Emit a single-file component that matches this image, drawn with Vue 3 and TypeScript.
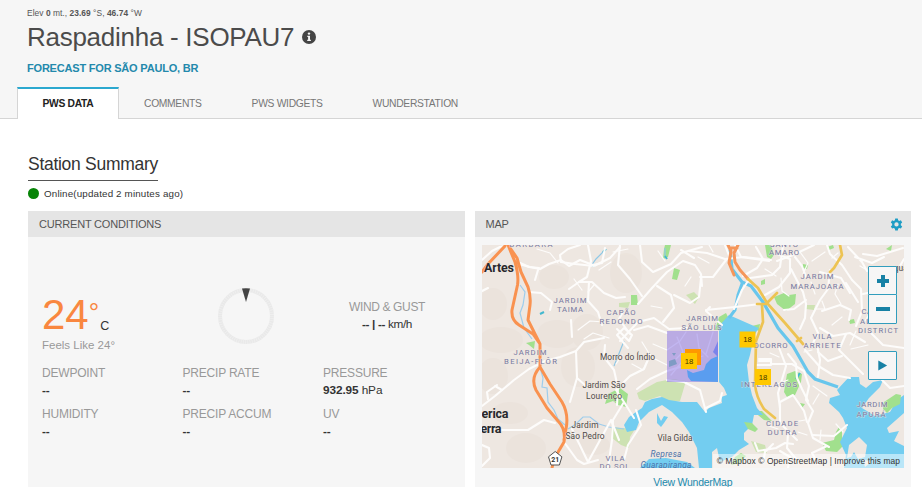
<script setup lang="ts">
interface MapLabel {
  text: string
  x: number
  y: number
  width: number
  kind: 'district' | 'place' | 'town' | 'water'
}

interface Reading {
  label: string
  value: string
  unit?: string
}

const tabs = [
  { label: 'PWS DATA', active: true },
  { label: 'COMMENTS', active: false },
  { label: 'PWS WIDGETS', active: false },
  { label: 'WUNDERSTATION', active: false },
]

const readings: Reading[] = [
  { label: 'DEWPOINT', value: '--' },
  { label: 'PRECIP RATE', value: '--' },
  { label: 'PRESSURE', value: '932.95', unit: 'hPa' },
  { label: 'HUMIDITY', value: '--' },
  { label: 'PRECIP ACCUM', value: '--' },
  { label: 'UV', value: '--' },
]

const labels: MapLabel[] = [
  { text: 'BARBARA', x: 531, y: 246.8, width: 43, kind: 'district' },
  { text: 'SANTO', x: 784, y: 246.5, width: 28, kind: 'district' },
  { text: 'AMARO', x: 784, y: 255, width: 30, kind: 'district' },
  { text: 'JARDIM', x: 570, y: 302.5, width: 33, kind: 'district' },
  { text: 'TAIMA', x: 570, y: 311.5, width: 26, kind: 'district' },
  { text: 'CAPÃO', x: 621, y: 314.5, width: 29, kind: 'district' },
  { text: 'REDONDO', x: 621, y: 323.5, width: 43, kind: 'district' },
  { text: 'JARDIM', x: 702, y: 320.5, width: 32, kind: 'district' },
  { text: 'SÃO LUÍS', x: 701.5, y: 330, width: 40, kind: 'district' },
  { text: 'JARDIM', x: 817, y: 279, width: 33, kind: 'district' },
  { text: 'MARAJOARA', x: 817, y: 288.5, width: 53, kind: 'district' },
  { text: 'CAMPO', x: 876, y: 314, width: 29, kind: 'district' },
  { text: 'ALEGRE', x: 877, y: 323.5, width: 34, kind: 'district' },
  { text: 'DISTRICT', x: 878, y: 332.5, width: 40, kind: 'district' },
  { text: 'VILA', x: 822, y: 339, width: 19, kind: 'district' },
  { text: 'ARRIETE', x: 822, y: 348, width: 37, kind: 'district' },
  { text: 'OCORRO', x: 770.5, y: 348, width: 34, kind: 'district' },
  { text: 'INTERLAGOS', x: 769, y: 386.7, width: 56, kind: 'district' },
  { text: 'JARDIM', x: 530, y: 355, width: 33, kind: 'district' },
  { text: 'BEIJA-FLÔR', x: 530.5, y: 364, width: 53, kind: 'district' },
  { text: 'CIDADE', x: 782, y: 425.7, width: 32, kind: 'district' },
  { text: 'DUTRA', x: 782, y: 435, width: 29, kind: 'district' },
  { text: 'JARDIM', x: 872, y: 407.3, width: 31, kind: 'district' },
  { text: 'APURÁ', x: 871, y: 416.5, width: 29, kind: 'district' },
  { text: 'VILA', x: 615, y: 460.5, width: 19, kind: 'district' },
  { text: 'DO SOL', x: 614.5, y: 469, width: 30, kind: 'district' },
  { text: 'Morro do Índio', x: 627.5, y: 360, width: 55, kind: 'place' },
  { text: 'Jardim São', x: 604, y: 388.3, width: 43, kind: 'place' },
  { text: 'Lourenço', x: 604, y: 399, width: 36, kind: 'place' },
  { text: 'Jardim', x: 585, y: 428.3, width: 27, kind: 'place' },
  { text: 'São Pedro', x: 585, y: 439, width: 39, kind: 'place' },
  { text: 'Vila Gilda', x: 675, y: 440.5, width: 35, kind: 'place' },
  { text: 'Artes', x: 499, y: 272, width: 30, kind: 'town' },
  { text: 'erica', x: 495, y: 418, width: 27, kind: 'town' },
  { text: 'erra', x: 491, y: 433.3, width: 21, kind: 'town' },
  { text: 'Represa', x: 666, y: 457, width: 31, kind: 'water' },
  { text: 'Guarapiranga', x: 666, y: 467.5, width: 51, kind: 'water' },
]

const majorStreets: string[] = [
  'M482 260 L492 251 500 247 506 246 M509 248 L518 262 529 267 539 268 M482 291 L488 288',
  'M515 263 L530 267 540 269 549 264 561 260 569 266 580 260 593 265 602 263 605 248',
  'M561 262 L560 255 568 249 580 245 M561 262 L575 264 594 266 610 258 620 247 M529 292 L541 293 552 302 550 310 M538 270 L535 280',
  'M482 406 L495 396 514 380 529 369 545 361 560 357 576 351 584 342 604 338',
  'M488 399 L487 392 497 385 M495 386 L502 390 M482 428 L503 430 528 430 544 420 555 423',
  'M576 351 L577 378 570 402 M577 378 L586 386 M588 245 L591 261 587 277 579 282 569 289',
  'M579 282 L592 282 604 293 616 298 625 297 M589 282 L588 301 598 312 602 325 M571 320 L572 337',
  'M640 245 L642 262 653 272 671 264 681 253 702 247 M620 245 L618 265 630 279 642 296 M681 250 L694 258',
  'M638 304 L652 288 667 272 683 261 695 265 701 274 702 286 M700 277 L713 277 726 260',
  'M657 286 L671 295 674 308 663 322 M674 295 L684 300 690 303 699 297 701 278',
  'M689 251 L707 253 725 259 744 257 771 260',
  'M623 312 L619 319 630 334 M620 341 L638 322 654 318 669 329 687 328 M634 330 L648 326 667 333',
  'M605 345 L604 357 614 370 618 388 617 405 M617 329 L629 341 632 335 624 328 617 335 628 348',
  'M637 389 L650 379 667 371 680 367 M617 389 L630 376 644 369 650 355',
  'M667 380 L684 382 700 390 706 412 M706 408 L720 401 722 393',
  'M706 310 L735 307 760 304 M722 325 L706 311 710 307',
  'M734 309 L742 290 750 278 772 275 780 267 783 245',
  'M743 276 L757 268 763 259 756 247',
  'M765 295 L779 287 790 273 790 259 777 254 M791 269 L803 292 806 304 805 318 800 329',
  'M777 261 L793 255 814 245 M795 257 L802 266 806 277',
  'M827 245 L830 254 842 265 852 280 861 289 862 311 856 326',
  'M820 272 L841 278 850 293 M830 270 L828 289 820 300 811 318 818 333 811 347',
  'M848 247 L862 262 867 271 M855 257 L872 263 884 257 M863 254 L877 256 903 248',
  'M846 283 L858 302 M822 311 L840 305 851 310 849 320 M820 328 L833 336 850 333 865 342 M806 300 L794 309 784 310',
  'M817 345 L820 360 818 377 M788 354 L796 364 797 378 802 389 808 401 M778 345 L786 366 778 393 780 408',
  'M805 350 L820 367 833 375 850 378 M846 334 L839 350 854 365 863 374',
  'M771 364 L792 364 804 371 809 386 806 400 813 411 808 423 813 438 829 447',
  'M780 402 L793 395 804 411 807 422 M780 404 L780 423 797 440 M757 365h14v-6h-12M759 361h12',
  'M812 435 L834 436 847 425 M788 433 L787 448 797 460 M780 451 L790 457 788 468 M827 446 L812 453 818 464',
  'M755 443 L758 451 776 448 785 443 793 444 M763 463 L765 452 773 444',
  'M482 445 L489 448 490 458 482 466 M564 442 L577 460 584 464 598 460 M572 429 L588 462 M588 462 L611 420 619 440',
  'M616 390 L624 402 613 420 612 440 608 468 M624 402 L634 418 M636 410 L641 425 628 445 624 460',
  'M887 268 L876 277 872 292 863 294 M904 259 L900 266 M870 332 L883 345 904 348 M882 380 L890 388 904 386',
  'M842 356 L828 361 818 352 M725 245 L730 258 M735 245 L741 257 769 261',
]

const minorStreets: string[] = [
  'M537 249 L550 253 558 263 M611 262 L599 270 M613 252 L628 249 M582 290 L574 279 M594 285 L588 292',
  'M658 251 L665 261 M662 308 L651 306 M691 277 L685 286 M698 257 L709 263 M713 252 L709 245',
  'M578 330 L590 321 604 322 M609 338 L593 333 584 339',
  'M642 342 L650 355 643 370 632 364 M655 359 L667 365 M622 355 L616 364 M653 344 L667 350 680 341 686 332',
  'M671 375 L681 363 703 356 M677 337 L683 352 676 359 M697 334 L699 348 708 357 M713 332l-7 22',
  'M765 269 L776 276 M800 252 L808 263 803 274 M825 252 L812 261 M838 253 L832 258',
  'M781 278 L782 291 789 296 M811 282 L815 294 M838 284 L835 294 841 304 M885 272 L895 276 M867 270 L860 266',
  'M822 301 L825 309 815 309 M842 317 L832 325 M871 311 L865 321 M856 331 L850 345 M868 345 L851 349',
  'M812 350 L804 352 M770 353 L779 357 M788 380 L777 384 M813 386 L827 396 M819 394 L813 404',
  'M794 422 L805 420 M798 432 L807 435 M821 430 L820 440 M769 426 L778 429 M843 432 L836 424',
]

const hillShades = [
  [501, 340, 22, 13], [493, 376, 15, 18], [510, 413, 18, 11], [526, 448, 20, 15],
  [554, 277, 15, 12], [557, 334, 20, 14], [587, 332, 16, 18], [626, 273, 16, 20],
  [578, 367, 17, 20], [594, 445, 16, 10], [493, 304, 14, 16],
]
</script>

<template>
  <main class="page">
    <header class="masthead">
      <div class="elevation">Elev <b>0</b> mt., <b>23.69</b> °S, <b>46.74</b> °W</div>
      <div class="title-row">
        <h1>Raspadinha - ISOPAU7</h1>
        <svg class="info" viewBox="0 0 14 14" aria-label="Station information">
          <circle cx="7" cy="7" r="7" fill="#454545" />
          <circle cx="7" cy="3.6" r="1.2" fill="#f6f6f6" />
          <path d="M5.3 5.8H8v4h.9v1.1H5.2V9.8h.9V6.9h-.8z" fill="#f6f6f6" />
        </svg>
      </div>
      <a class="forecast">FORECAST FOR SÃO PAULO, BR</a>
      <nav class="tabs">
        <a v-for="tab in tabs" :key="tab.label" class="tab" :class="{ active: tab.active }"><span>{{ tab.label }}</span></a>
      </nav>
    </header>

    <section class="summary">
      <h2>Station Summary</h2>
      <div class="status"><i class="dot"></i><span>Online(updated 2 minutes ago)</span></div>
    </section>

    <div class="cards">
      <section class="card conditions">
        <div class="card-head"><span class="conditions-title">CURRENT CONDITIONS</span></div>
        <div class="now">
          <div class="temperature">
            <div class="degrees"><span class="number">24</span><span class="degree">°</span><span class="scale">C</span></div>
            <div class="feels">Feels Like 24°</div>
          </div>
          <svg class="dial" viewBox="0 0 58 58">
            <circle cx="29" cy="29" r="26" fill="none" stroke="#e9e9e9" stroke-width="4" />
            <circle cx="29" cy="29" r="26" fill="none" stroke="#f1f1f1" stroke-width="4" stroke-dasharray=".6 1.66" />
            <path d="M25 1.5 Q29 .8 33 1.5 L29 15z" fill="#444" />
          </svg>
          <div class="wind">
            <div class="reading-label">WIND &amp; GUST</div>
            <div class="wind-value"><b>--</b> <b>|</b> <b>--</b> km/h</div>
          </div>
        </div>
        <div class="readings">
          <div v-for="item in readings" :key="item.label" class="reading">
            <div class="reading-label">{{ item.label }}</div>
            <div class="reading-value"><b>{{ item.value }}</b> {{ item.unit }}</div>
          </div>
        </div>
      </section>

      <section class="card map-card">
        <div class="card-head">
          <span>MAP</span>
          <svg class="gear" viewBox="0 0 24 24">
            <path fill-rule="evenodd" d="M9.6 1h4.8l.6 3.2 2 1.2 3.1-1.1 2.4 4.1-2.5 2.1v2.8l2.5 2.2-2.4 4.1-3.1-1.1-2 1.2-.6 3.3H9.6l-.6-3.3-2-1.2-3.1 1.1-2.4-4.1L4 13.3v-2.8L1.5 8.4l2.4-4.1L7 5.4l2-1.2zM12 7.9a4 4 0 1 0 0 8 4 4 0 0 0 0-8z" />
          </svg>
        </div>
        <div class="map">
          <svg class="canvas" viewBox="482 245 422 223">
            <rect x="482" y="245" width="422" height="223" fill="#eee7e1" />
            <g fill="#e8dfd8" opacity=".45">
              <ellipse v-for="(h, i) in hillShades" :key="i" :cx="h[0]" :cy="h[1]" :rx="h[2]" :ry="h[3]" />
            </g>

            <g fill="#cde2b2">
              <path d="M637 393l20-11 15-3 14 2-6 20-11 1-9-6-15 5-6-2z" />
              <path d="M611 427l24 2-5 8-1 11-8-3-9-7zM686 295l8-3 5 5-4 7-6-6zM619 303l11-1-2 6-9-1zM807 305l8 0-1 5-8-1zM751 441l14 4 2 8-11-1z" />
            </g>
            <g fill="#a1e08d">
              <path d="M665 245h6l-3 12-5 2 1-10zM674 268l6 2-3 10-5-1zM631 295l6 0 1 10-7 0zM719 317l7-4 3 6-7 11-7 0zM761 281l4-2v5l-4 1zM765 245h6l3 10-3 4-4-2z" />
              <path d="M774 297l10-4 5 2 7-1-1 10-9 7-9-7zM803 264l5 1-1 4-5-1zM849 320l5-1 1 4-5 1zM827 247l6-2 1 3-5 2zM886 249l6-4-1 6z" />
              <path d="M787 374l8-3 7 3-1 8-6 13-8 2-3-5zM822 443l12-3 2-8 3-5 3 3 0 10 7 5-7 2-5 5-11-1z" />
              <path d="M608 394l12-6 8 6-2 13-8-2-5-4-8 3zM748 327l12-3-1 7zM526 343l9-2-1 8-5-4z" />
              <path d="M753 411l9 0 10 10-8-1zM800 403l5 1-3 4zM760 373l4 2-4 3z" />
            </g>

            <g fill="#73cdf0">
              <path d="M729 315L758.500 328 754 336 750 355 747 365 749 382 752 395 757 408 763 415 754 415 752 425 744 433 744 440 749 444 739 450 732 457 720 462 717 448 712 452 712 468H699L697 448 689 432 682 422 672 412 662 405 649 412 639 422 636 430 627 432 624 425 629 417 636 412 642 408 645 402 652 399 662 397 669 400 682 402 697 402 705 412 709 408 722 403 721 397 727 395 724 388 719 382V326z" />
              <path d="M837 390L849 377 859 377 860 384 866 388 873 382 883 380 880 387 869 398 862 408 875 416 890 412 897 400 904 395V413L887 428 889 433 899 431 894 441 904 446V468H844L846 455 840 442 847 428 843 418 839 412 829 403 830 398 840 395z" />
              <path d="M657 413l4 8 3-5 4 1-4 6-3 4-4-4zM640 468l9-9 17-1 21 4 8 6z" />
            </g>
            <path d="M847 458L849 445 859 437 867 445 865 457 858 459 854 452 851 457zM863 459l8 3-6 5zM838 455l-10 6 12-1z" fill="#eee7e1" />
            <g fill="#a1e08d">
              <path d="M744 422l8 1 6 6-3 3-7-3zM735 457l6-4 5 3-6 7-9 2zM884 402l12-8 5 1-1 9-8 4-5 5-4-4z" />
            </g>

            <g fill="none" stroke="#68c6ec">
              <path d="M730 250L732 269 742 282 751 286 763 302 778 328 793 346 808 372 815 379 838 387" stroke-width="3.200" />
              <path d="M743 281L738 295 735 310 729 318" stroke-width="3" />
              <path d="M520 285l5 7-2 13-3 8 4 15 8 11M540 367l3 11-1 9 5 1 1 14 6 8 4 9 7 6M568 429l8-5 7-7 7 0 9 7 10 3 15 2" stroke="#9ecdec" stroke-width="1.200" />
              <path d="M591 266l5-7 10-10M665 248l0 9M614 366l10-25" stroke="#8fc8e6" stroke-width="1.200" />
              <path d="M592 266l3 0M603 252l3-3M540 314l4-2M665 256l2 3M796 379l4-6" stroke="#44b8cf" stroke-width="2" />
            </g>

            <g fill="none" stroke="#fdfcfb" stroke-linejoin="round" stroke-linecap="round">
              <path v-for="street in minorStreets" :key="street" :d="street" stroke-width="1.200" />
              <path v-for="street in majorStreets" :key="street" :d="street" stroke-width="2.100" />
            </g>

            <rect x="667" y="331" width="51" height="51" fill="#826be6" opacity=".48" />
            <path d="M718 341L713 352 718 357z" fill="#7b83ea" />
            <path d="M718 356L711 359 706 364 704 370 693 373 687 370 688 377 691 381 718 382z" fill="#5a9def" />
            <path d="M669 361l6-2 2 5-8 3zM672 353l4 0-2 3z" fill="#7f9bc4" />

            <g fill="none" stroke-linejoin="round" stroke-linecap="round">
              <path d="M482 272L488 264 505 246M508 245L515 262Q519 276 517.500 285L512 310Q511 320 519 325L533 334 540 344M508 245L517 258 521 272 528 287Q531 296 530 305L528 320 535 334 540 344 540 367Q530 378 536 390L547 408 558 421Q566 429 564 442L554 459 552 468M540 367L550 384 562 402Q569 414 566 429L564 440" stroke="#f99250" stroke-width="3" />
              <path d="M728 245L731 251 729 263 734 275M738 245L734 253 735 262 740 270 748 279M731 248h6" stroke="#f5965a" stroke-width="3" />
              <path d="M748 279L758 288 767 303 785 323 803 344M757 304h9l11-11M797 341l4-3M762 305L763 322 756 341 755 384Q756 397 764 409L775 418M840 245L842 255 834 268 830 272" stroke="#edc352" stroke-width="2.700" />
            </g>

            <g v-for="(label, i) in labels" :key="i">
              <text :x="label.x" :y="label.y" :textLength="label.width" lengthAdjust="spacing" :class="label.kind">{{ label.text }}</text>
            </g>
            <text x="898.500" y="271" class="place">aqua</text>

            <path d="M548.500 456.800l6.700-5.300 6.700 5.300-2.500 8.200h-8.400z" fill="#fff" stroke="#555" />
            <text x="555.200" y="461.500" class="shield">21</text>

            <rect x="685" y="349" width="16" height="16" fill="#ff9800" />
            <rect x="681" y="353" width="16" height="16" fill="#ffc800" />
            <rect x="739.500" y="331.500" width="16" height="16" fill="#ffc800" />
            <rect x="755" y="369" width="16" height="16" fill="#ffc800" />
            <text x="689" y="363.800" class="marker">18</text>
            <text x="747.500" y="342.300" class="marker">18</text>
            <text x="763" y="380" class="marker">18</text>
          </svg>
          <div class="zoom-controls">
            <button aria-label="Zoom in"><svg viewBox="0 0 14 14"><path d="M5 1h4v4h4v4H9v4H5V9H1V5h4z" /></svg></button>
            <button aria-label="Zoom out"><svg viewBox="0 0 14 14"><path d="M0 5h14v4H0z" /></svg></button>
          </div>
          <button class="play" aria-label="Play"><svg viewBox="0 0 14 14"><path d="M2.500 1.500L12 7l-9.500 5.500z" /></svg></button>
          <div class="credits"><span>© Mapbox © OpenStreetMap | Improve this map</span></div>
        </div>
        <a class="wundermap">View WunderMap</a>
      </section>
    </div>
  </main>
</template>

<style>
body {
  background: #fff;
}
</style>

<style scoped>
* {
  box-sizing: border-box;
}

.page {
  width: 922px;
  height: 487px;
  overflow: hidden;
  display: flex;
  flex-direction: column;
  font-family: "Liberation Sans", Arial, sans-serif;
  color: #333;
}

.masthead {
  height: 119px;
  flex: none;
  display: flex;
  flex-direction: column;
  padding-top: 8px;
  background: #f6f6f6;
  box-shadow: inset 0 -1px #d5d5d5;
}

.elevation {
  padding-left: 27px;
  height: 10px;
  line-height: 10px;
  font-size: 8.4px;
  letter-spacing: .05px;
  color: #555;
  white-space: nowrap;
}

.title-row {
  display: flex;
  align-items: center;
  gap: 8px;
  height: 36px;
  padding-left: 27px;
}

h1 {
  margin: 1px 0 0;
  font-size: 26px;
  line-height: 36px;
  font-weight: 400;
  letter-spacing: -.27px;
  color: #4b4b4b;
}

.info {
  width: 14px;
  height: 14px;
  margin-top: 2px;
}

.forecast {
  padding: 8px 0 0 27px;
  height: 33px;
  font-size: 11px;
  line-height: 13px;
  font-weight: 700;
  letter-spacing: -.2px;
  color: #2389ac;
}

.tabs {
  display: flex;
  height: 32px;
  padding-left: 17px;
}

.tab {
  padding: 0 25px;
  font-size: 10.3px;
  line-height: 33px;
  letter-spacing: -.31px;
  color: #777;
}

.tab.active {
  width: 102px;
  padding: 0;
  text-align: center;
  line-height: 29px;
  font-weight: 700;
  color: #222;
  background: #fff;
  border: solid #d5d5d5;
  border-width: 2px 1px 0;
  border-top-color: #2ba8cf;
}

.summary {
  height: 92px;
  flex: none;
  padding: 34px 0 0 28px;
}

h2 {
  width: 130px;
  height: 28px;
  margin: 0;
  font-size: 17.5px;
  line-height: 23px;
  font-weight: 400;
  letter-spacing: -.28px;
  color: #333;
  border-bottom: 1px solid #555;
  white-space: nowrap;
}

.status {
  display: flex;
  align-items: center;
  gap: 5px;
  height: 24px;
  font-size: 9.8px;
  letter-spacing: .16px;
}

.dot {
  width: 11px;
  height: 11px;
  border-radius: 50%;
  background: #078407;
}

.cards {
  display: grid;
  grid-template-columns: 436.5px 436.5px;
  gap: 10px;
  flex: 1;
  padding-left: 28px;
}

.card {
  background: #f6f6f6;
}

.card-head {
  display: flex;
  align-items: center;
  justify-content: space-between;
  height: 26px;
  padding: 0 8px 0 11px;
  background: #e5e5e5;
  font-size: 11px;
  letter-spacing: -.19px;
  color: #555;
}

.gear {
  width: 13px;
  height: 13px;
  fill: #1e9dc5;
}

.now {
  display: grid;
  grid-template-columns: 147px 129px 1fr;
  height: 129px;
  padding: 50px 0 0 14px;
}

.temperature {
  padding-top: 7px;
}

.degrees {
  display: flex;
  height: 42px;
  line-height: 42px;
}

.number {
  font-size: 42px;
  color: #f98740;
}

.degree {
  width: 11.5px;
  font-size: 26px;
  line-height: 36px;
  color: #f98740;
}

.scale {
  font-size: 12.5px;
  line-height: 64px;
}

.feels {
  padding-top: 3px;
  font-size: 11.5px;
  line-height: 13px;
  color: #999;
}

.dial {
  width: 58px;
  height: 58px;
  margin-left: 28px;
}

.wind {
  width: 108px;
  margin-left: 15px;
  padding-top: 13px;
  text-align: center;
}

.reading-label {
  font-size: 12px;
  line-height: 14px;
  letter-spacing: -.2px;
  color: #999;
  white-space: nowrap;
}

.wind .reading-label {
  letter-spacing: -.36px;
}

.wind-value,
.reading-value {
  font-size: 11.8px;
  line-height: 14px;
  letter-spacing: -.1px;
  color: #333;
}

.wind-value {
  margin-top: 3px;
  letter-spacing: -.36px;
}

.readings {
  display: grid;
  grid-template-columns: 140.5px 140.5px 1fr;
  grid-auto-rows: 41px;
  padding-left: 14px;
}

.reading-value {
  margin-top: 3px;
}

.map-card {
  display: flex;
  flex-direction: column;
}

.map {
  position: relative;
  width: 422px;
  height: 223px;
  margin: 8px 0 0 7.5px;
  overflow: hidden;
}

.canvas {
  display: block;
  width: 422px;
  height: 223px;
}

.canvas text {
  text-anchor: middle;
  font-family: Roboto, "Liberation Sans", sans-serif;
  stroke: #eee7e1;
  stroke-width: 1px;
  stroke-opacity: .7;
  paint-order: stroke;
}

.canvas .district {
  font-size: 7.7px;
  fill: #7577a0;
}

.canvas .place {
  font-size: 8.4px;
  fill: #4e4a48;
}

.canvas .town {
  font-size: 12.5px;
  font-weight: 700;
  fill: #28282c;
}

.canvas .water {
  font-size: 8.4px;
  font-style: italic;
  fill: #4c72aa;
  stroke: none;
}

.canvas .shield {
  font-size: 7px;
  font-weight: 700;
  fill: #333;
  stroke: none;
}

.canvas .marker {
  font-family: "Liberation Sans", sans-serif;
  font-size: 7.7px;
  fill: #3f3600;
  stroke: none;
}

button {
  display: flex;
  align-items: center;
  justify-content: center;
  padding: 0;
  border: 1px solid #319dbd;
  border-radius: 1px;
  background: #f6f6f6;
}

button svg {
  width: 14px;
  height: 14px;
  fill: #1781a5;
}

.zoom-controls {
  position: absolute;
  top: 21px;
  right: 7px;
  width: 29px;
}

.zoom-controls button {
  width: 29px;
  height: 29px;
}

.zoom-controls button + button {
  margin-top: -1px;
  height: 30px;
}

.play {
  position: absolute;
  top: 106px;
  right: 7px;
  width: 29px;
  height: 29px;
}

.play svg {
  width: 13px;
  height: 13px;
}

.credits {
  position: absolute;
  right: 0;
  bottom: 0;
  height: 14px;
  padding: 0 4px;
  font-size: 8.4px;
  line-height: 14px;
  letter-spacing: .09px;
  background: rgba(255, 255, 255, .5);
  white-space: nowrap;
}

.wundermap {
  padding-top: 8px;
  text-align: center;
  font-size: 10.5px;
  line-height: 13px;
  letter-spacing: -.25px;
  color: #2389ac;
}
</style>
